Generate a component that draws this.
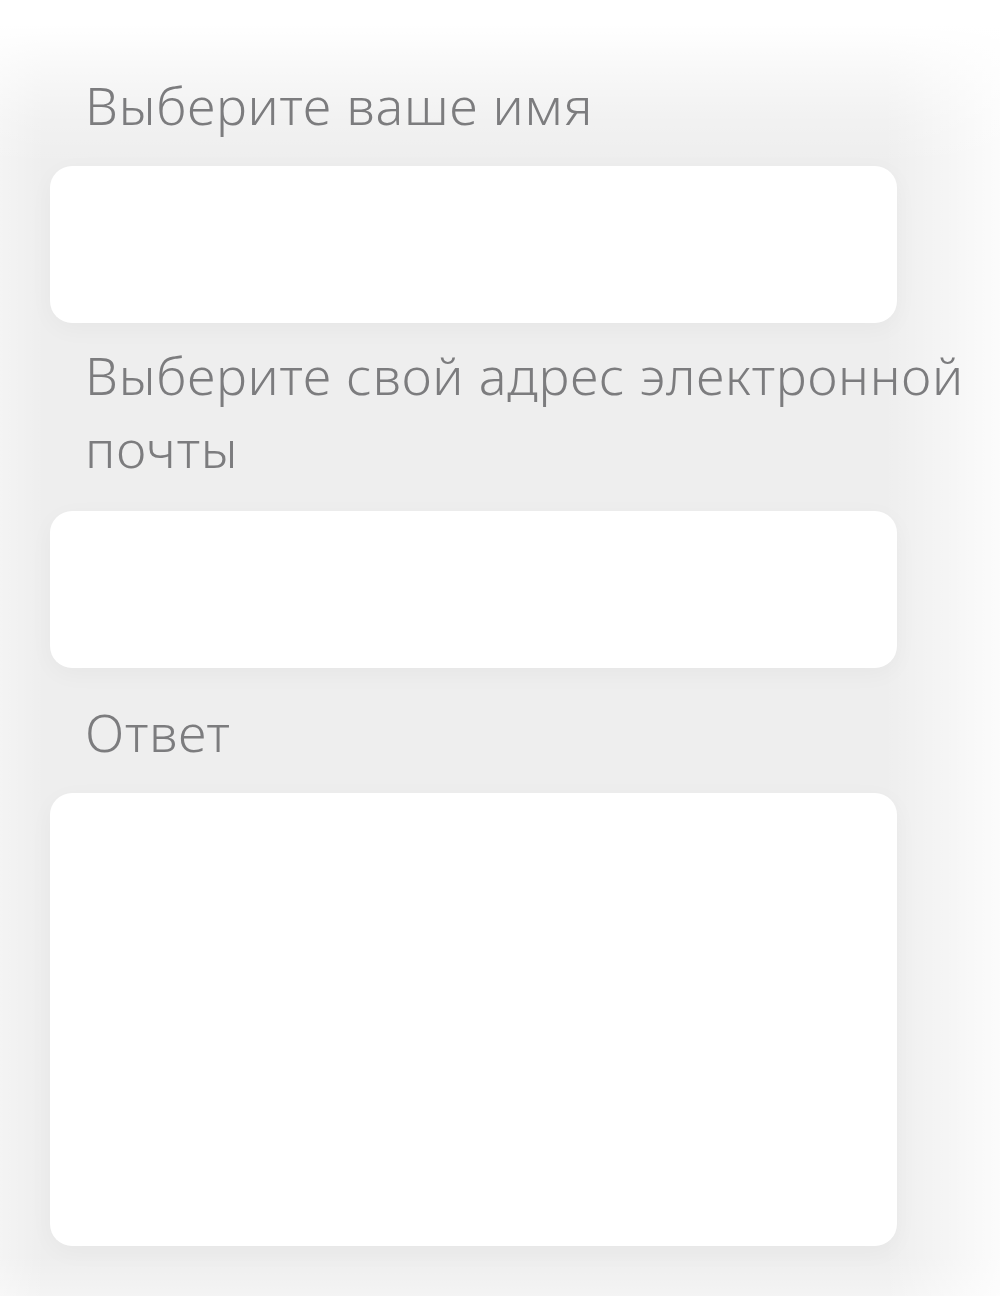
import React from "react";

const labelCls =
  "block ml-[35px] w-[920px] text-[52px] leading-[73px] font-light text-[#7c7c7e] tracking-[0.8px]";
const fieldCls =
  "block w-[847px] bg-white rounded-[22px] border-0 outline-none resize-none shadow-[0_6px_24px_rgba(0,0,0,0.035)]";

export default function App() {
  return (
    <div
      className="w-[1000px] h-[1296px] overflow-hidden bg-[#eeeeee] bg-[image:linear-gradient(to_bottom,#ffffff_0px,#ffffff_25px,rgba(255,255,255,0.6)_70px,rgba(255,255,255,0.2)_120px,rgba(255,255,255,0)_165px),linear-gradient(to_left,rgba(255,255,255,0.8)_0px,rgba(255,255,255,0.45)_50px,rgba(255,255,255,0)_115px),linear-gradient(to_right,rgba(255,255,255,0.35)_0px,rgba(255,255,255,0)_45px),linear-gradient(to_top,rgba(255,255,255,0.35)_0px,rgba(255,255,255,0)_40px)] pt-[68px] pl-[50px]"
      style={{ fontFamily: '"Noto Sans", "Open Sans", sans-serif' }}
    >
      <label className={labelCls}>Выберите ваше имя</label>
      <input className={`${fieldCls} h-[157px] mt-[25px]`} />
      <label className={`${labelCls} mt-[15px]`}>
        Выберите свой адрес электронной почты
      </label>
      <input className={`${fieldCls} h-[157px] mt-[27px]`} />
      <label className={`${labelCls} mt-[27px]`}>Ответ</label>
      <textarea className={`${fieldCls} h-[453px] mt-[25px]`} />
    </div>
  );
}
